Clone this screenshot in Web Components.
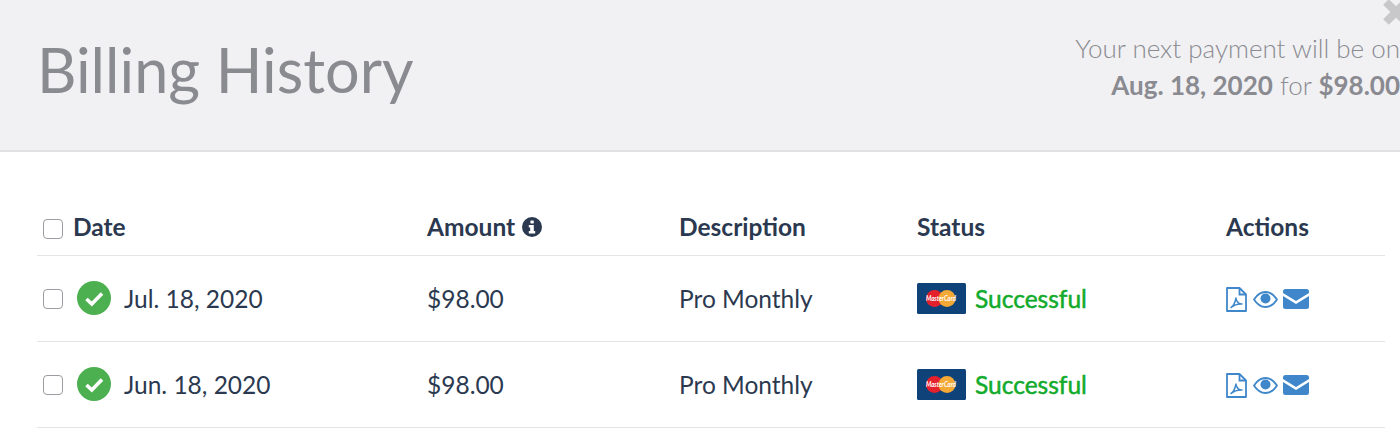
<!DOCTYPE html>
<html>
<head>
<meta charset="utf-8">
<title>Billing History</title>
<style>
  html, body { margin: 0; padding: 0; background: #fff; overflow: hidden; }
  body { font-family: Lato, "Liberation Sans", sans-serif; height: 437px; }
</style>
</head>
<body>
<billing-header></billing-header>
<billing-table>
  <billing-row slot="rows" date="Jul. 18, 2020" amount="$98.00" plan="Pro Monthly" status="Successful"></billing-row>
  <billing-row slot="rows" date="Jun. 18, 2020" amount="$98.00" plan="Pro Monthly" status="Successful"></billing-row>
</billing-table>

<script>
class BillingHeader extends HTMLElement {
  constructor() {
    super();
    this.attachShadow({ mode: 'open' });
    this.shadowRoot.innerHTML = `
      <style>
        :host {
          display: flex;
          box-sizing: border-box;
          height: 152px;
          padding-left: 37px;
          justify-content: space-between;
          align-items: flex-start;
          background: #f1f1f3;
          border-bottom: 2px solid #e1e1e1;
          color: #8a8a91;
          position: relative;
          overflow: hidden;
        }
        h1 {
          margin: 31px 0 0;
          font-size: 61.200px;
          line-height: 78px;
          font-weight: 400;
        }
        .next {
          margin-top: 30px;
          text-align: right;
          font-size: 26px;
          line-height: 37px;
          font-weight: 300;
          white-space: nowrap;
        }
        b { font-weight: 700; }
        svg { position: absolute; right: -10px; top: -4px; }
      </style>
      <h1>Billing History</h1>
      <div class="next">Your next payment will be on<br><b>Aug. 18, 2020</b> for <b>$98.00</b></div>
      <svg width="28" height="32" viewBox="0 0 28 32"><path d="M4 6 L24 26 M24 6 L4 26" stroke="#c8c8ca" stroke-width="8" fill="none"/></svg>
    `;
  }
}
customElements.define('billing-header', BillingHeader);

class BillingCheck extends HTMLElement {
  constructor() {
    super();
    this.attachShadow({ mode: 'open' });
    this.shadowRoot.innerHTML = `
      <style>
        :host {
          display: block;
          box-sizing: border-box;
          width: 20px;
          height: 20px;
          background: #fff;
          border: 1.5px solid #9c9ca2;
          border-radius: 4px;
        }
      </style>
    `;
  }
}
customElements.define('billing-check', BillingCheck);

class BillingTable extends HTMLElement {
  constructor() {
    super();
    this.attachShadow({ mode: 'open' });
    this.shadowRoot.innerHTML = `
      <style>
        :host {
          display: block;
          margin: 0 15px 0 37px;
          padding-top: 52px;
          color: #2b3950;
        }
        .head {
          display: grid;
          grid-template-columns: 384px 253px 237px 309px 1fr;
          height: 52px;
          box-sizing: border-box;
          padding: 0 0 6px 6px;
          align-items: center;
          border-bottom: 1px solid #e4e4e6;
          font-size: 24.500px;
          font-weight: 700;
        }
        .first { display: flex; align-items: center; gap: 11px; }
        .first span { margin-left: -1px; }
        .first billing-check { margin-top: 5px; }
        .amount { display: flex; align-items: center; gap: 7px; }
        .desc { margin-left: -1px; }
      </style>
      <div class="head">
        <div class="first"><billing-check></billing-check><span>Date</span></div>
        <div class="amount"><span>Amount</span>
          <svg width="20" height="20" viewBox="0 0 20 20"><circle cx="10" cy="10" r="10" fill="#2b3950"/><rect x="8.400" y="3.400" width="3.400" height="3" rx=".6" fill="#fff"/><path d="M6.800 8h5v6h1.400v2.600H6.800V14h1.400v-3.400H6.800z" fill="#fff"/></svg>
        </div>
        <div class="desc">Description</div>
        <div>Status</div>
        <div>Actions</div>
      </div>
      <slot name="rows"></slot>
    `;
  }
}
customElements.define('billing-table', BillingTable);

class BillingRow extends HTMLElement {
  constructor() {
    super();
    this.attachShadow({ mode: 'open' });
    this.shadowRoot.innerHTML = `
      <style>
        :host {
          display: grid;
          grid-template-columns: 384px 253px 237px 309px 1fr;
          height: 86px;
          box-sizing: border-box;
          padding: 0 0 1px 6px;
          align-items: center;
          border-bottom: 1px solid #e4e4e6;
          font-size: 24.500px;
          font-weight: 400;
        }
        .first { display: flex; align-items: center; }
        billing-check { margin-top: 2px; }
        .tick { margin: 0 13px 0 14px; display: block; }
        .plan { margin-left: -1px; }
        .status { display: flex; align-items: center; gap: 9px; color: #12ab2c; }
        .st { -webkit-text-stroke: 0.5px #12ab2c; }
        .card { display: block; }
        .card text { font: italic 700 7px Lato, sans-serif; fill: #fff; }
        .actions { display: flex; align-items: center; padding-top: 2px; }
        .actions svg { display: block; }
        .eye { margin: 0 5px 0 6px; }
      </style>
      <div class="first">
        <billing-check></billing-check>
        <svg class="tick" width="34" height="34" viewBox="0 0 34 34"><circle cx="17" cy="17" r="17" fill="#4caf50"/><path d="M9.500 18 L14.800 23 L25 12.500" fill="none" stroke="#fff" stroke-width="3.600"/></svg>
        <span class="date"></span>
      </div>
      <div class="amt"></div>
      <div class="plan"></div>
      <div class="status">
        <svg class="card" width="49" height="31" viewBox="0 0 49 31">
          <rect width="49" height="31" rx="1.500" fill="#0f4279"/>
          <circle cx="17.500" cy="15.500" r="8.500" fill="#e4202c"/>
          <circle cx="30" cy="15.500" r="8.500" fill="#f4a835"/>
          <text x="24" y="18" text-anchor="middle" textLength="30" lengthAdjust="spacingAndGlyphs">MasterCard</text>
        </svg>
        <span class="st"></span>
      </div>
      <div class="actions">
        <svg width="21" height="25" viewBox="0 0 21 25">
          <path d="M1 1h12.500L20 7.500V24H1z" fill="#fff" stroke="#3f87ca" stroke-width="1.800" stroke-linejoin="round"/>
          <path d="M13.500 1v6.500H20" fill="none" stroke="#3f87ca" stroke-width="1.800"/>
          <path d="M5 20.500c2.200-1.200 4-4.800 5-9.500.4 3.400 2.400 5.800 6 6-3.400-.2-7.800.8-11 3.500z" fill="none" stroke="#3f87ca" stroke-width="1.500" stroke-linejoin="round"/>
        </svg>
        <svg class="eye" width="25" height="17" viewBox="0 0 25 17">
          <path d="M1 8.500C4 3.800 8 1 12.500 1S21 3.800 24 8.500C21 13.200 17 16 12.500 16S4 13.200 1 8.500z" fill="none" stroke="#3f87ca" stroke-width="1.800"/>
          <circle cx="12.500" cy="7.500" r="5" fill="#3f87ca"/>
        </svg>
        <svg width="26" height="20" viewBox="0 0 26 20">
          <path d="M2.500 0h21A2.500 2.500 0 0 1 26 2.500v1.500L13 12 0 4V2.500A2.500 2.500 0 0 1 2.500 0z" fill="#3f87ca"/>
          <path d="M0 7l13 8 13-8v10.500a2.500 2.500 0 0 1-2.500 2.500h-21A2.500 2.500 0 0 1 0 17.500z" fill="#3f87ca"/>
        </svg>
      </div>
    `;
  }
  connectedCallback() {
    this.shadowRoot.querySelector('.date').textContent = this.getAttribute('date');
    this.shadowRoot.querySelector('.amt').textContent = this.getAttribute('amount');
    this.shadowRoot.querySelector('.plan').textContent = this.getAttribute('plan');
    this.shadowRoot.querySelector('.st').textContent = this.getAttribute('status');
  }
}
customElements.define('billing-row', BillingRow);
</script>
</body>
</html>
